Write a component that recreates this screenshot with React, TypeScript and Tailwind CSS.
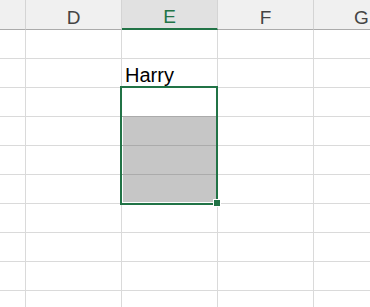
const cols = [
  { key: 'C', label: '', w: 'w-[26px]' },
  { key: 'D', label: 'D', w: 'w-[96px]' },
  { key: 'E', label: 'E', w: 'w-[96px]' },
  { key: 'F', label: 'F', w: 'w-[96px]' },
  { key: 'G', label: 'G', w: 'w-[96px]' },
];

const rows = Array.from({ length: 10 }, (_, i) => i);

function Cell({ col, row }: { col: string; row: number }) {
  const filled = col === 'E' && row >= 3 && row <= 5;
  const darkLine = col === 'E' && row >= 2 && row <= 4;
  return (
    <div
      className={`h-[29px] shrink-0 border-r border-b border-r-[#dadada] ${
        darkLine ? 'border-b-[#ababab]' : 'border-b-[#dadada]'
      } ${cols.find((c) => c.key === col)!.w} ${filled ? 'pl-px pr-px' : ''} ${
        filled && row === 5 ? 'pb-px' : ''
      }`}
    >
      {filled && <div className="h-full bg-[#c6c6c6]" />}
      {col === 'E' && row === 1 && (
        <div className="flex h-full items-end pb-[2px] pl-[3px] text-[20px] leading-[20px] text-black">
          Harry
        </div>
      )}
    </div>
  );
}

export default function App() {
  return (
    <div
      className="relative h-[307px] w-[370px] overflow-hidden bg-white"
      style={{ fontFamily: '"Liberation Sans", Arial, sans-serif' }}
    >
      {/* column headers */}
      <div className="flex">
        {cols.map((c) => (
          <div
            key={c.key}
            className={`flex h-[30px] shrink-0 items-end justify-center border-r border-r-[#d4d4d4] pb-[2px] text-[19px] leading-none ${c.w} ${
              c.key === 'E'
                ? 'border-b-2 border-b-[#217346] bg-[#e1e1e1] text-[#217346]'
                : 'border-b border-b-[#ababab] bg-[#f0f0f0] text-[#444]'
            }`}
          >
            {c.label}
          </div>
        ))}
      </div>

      {rows.map((r) => (
        <div key={r} className="flex">
          {cols.map((c) => (
            <Cell key={c.key} col={c.key} row={r} />
          ))}
        </div>
      ))}

      {/* selection */}
      <div className="absolute left-[120px] top-[86px] h-[119px] w-[98px] border-2 border-[#217346]" />
      <div className="absolute left-[213px] top-[199px] h-[8px] w-[8px] border border-white bg-[#217346]" />
    </div>
  );
}
